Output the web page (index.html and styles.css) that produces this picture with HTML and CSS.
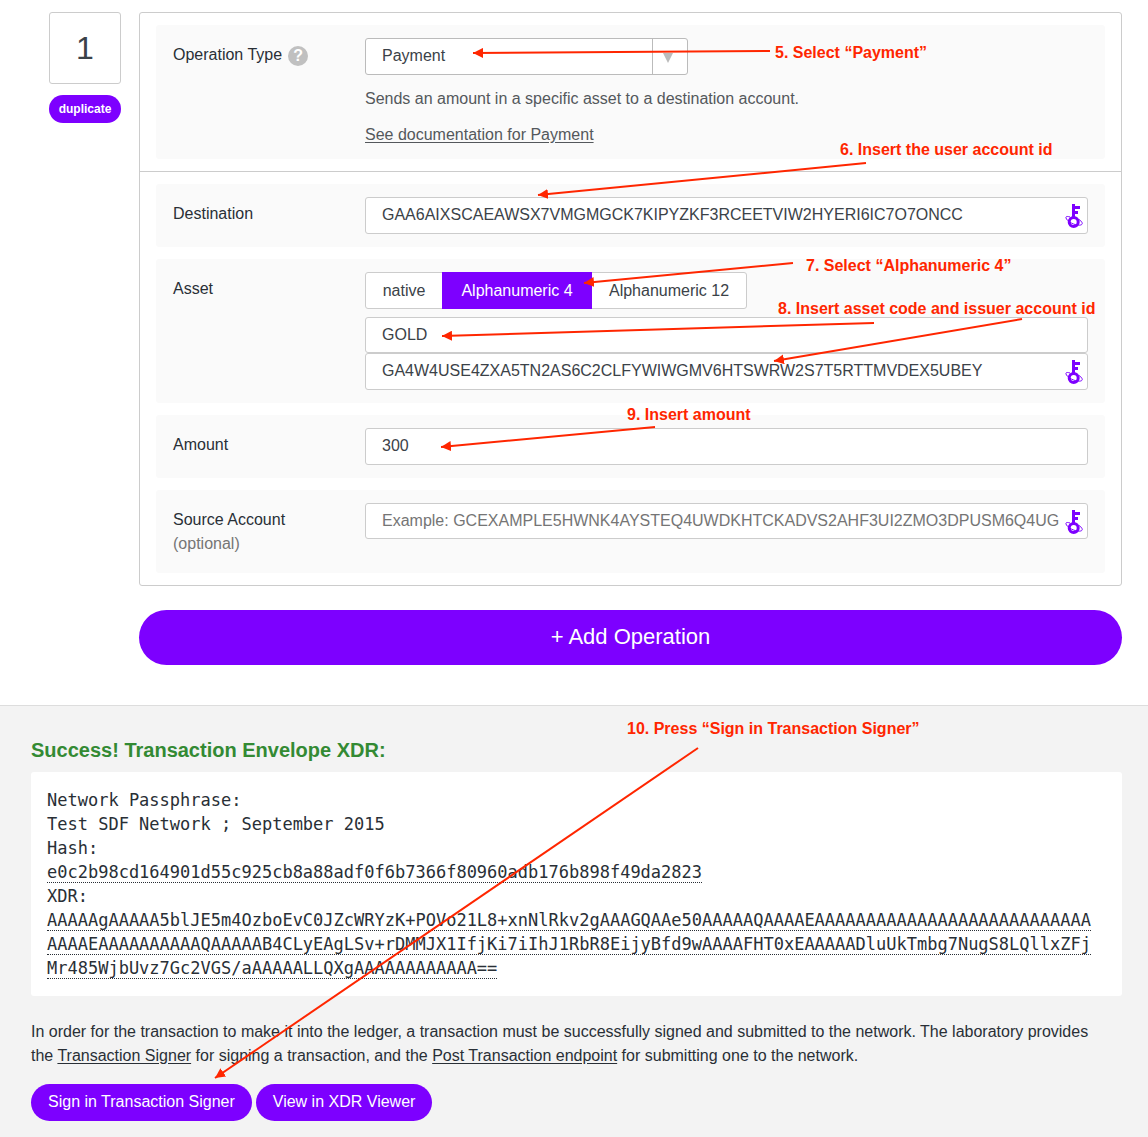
FILE: index.html
```html
<!DOCTYPE html>
<html lang="en">
<head>
  <meta charset="utf-8">
  <title>Transaction Builder</title>
  <link rel="stylesheet" href="styles.css">
</head>
<body>
  <svg class="sprite" aria-hidden="true">
    <symbol id="key" viewBox="0 0 18 25">
      <path fill="currentColor" d="M7 1h3v2h5v3h-5v2h3v3h-3v4H7z"/>
      <circle cx="8.700" cy="19" r="4.500" fill="none" stroke="currentColor" stroke-width="3"/>
      <path fill="none" stroke="currentColor" d="M5 14C2 13 .5 13.500 1 15c1 3 6 6 11 7 4 .6 6-.5 5-2.500-.4-1-1.500-2-3-3"/>
    </symbol>
  </svg>

  <main>
    <section class="builder">
      <div class="sequence">
        <div class="sequence-number">1</div>
        <button class="button button-small" type="button">duplicate</button>
      </div>
      <div class="column">
        <form class="panel">
          <div class="group">
            <div class="row row-type">
              <div class="label">
                <label for="type">Operation Type</label>
                <button class="help" type="button" aria-label="Help">?</button>
              </div>
              <div class="content">
                <div class="picker">
                  <select id="type"><option>Payment</option></select>
                  <svg class="picker-arrow" viewBox="0 0 10 10" aria-hidden="true"><path fill="#bbb" d="M0 0h10L5 10z"/></svg>
                </div>
                <p class="hint">Sends an amount in a specific asset to a destination account.</p>
                <p class="hint"><a href="#payment">See documentation for Payment</a></p>
              </div>
            </div>
          </div>
          <div class="group">
            <div class="row">
              <div class="label"><label for="destination">Destination</label></div>
              <div class="content">
                <div class="key-field">
                  <input id="destination" type="text" value="GAA6AIXSCAEAWSX7VMGMGCK7KIPYZKF3RCEETVIW2HYERI6IC7O7ONCC">
                  <svg class="key"><use href="#key"/></svg>
                </div>
              </div>
            </div>
            <div class="row">
              <div class="label"><label for="code">Asset</label></div>
              <div class="content">
                <div class="toggle">
                  <button type="button">native</button>
                  <button class="active" type="button">Alphanumeric 4</button>
                  <button type="button">Alphanumeric 12</button>
                </div>
                <input id="code" class="input-short" type="text" value="GOLD">
                <div class="key-field">
                  <input type="text" aria-label="Issuer account ID" value="GA4W4USE4ZXA5TN2AS6C2CLFYWIWGMV6HTSWRW2S7T5RTTMVDEX5UBEY">
                  <svg class="key"><use href="#key"/></svg>
                </div>
              </div>
            </div>
            <div class="row">
              <div class="label"><label for="amount">Amount</label></div>
              <div class="content"><input id="amount" type="text" value="300"></div>
            </div>
            <div class="row">
              <div class="label"><label for="source">Source Account<br><span class="optional">(optional)</span></label></div>
              <div class="content">
                <div class="key-field">
                  <input id="source" class="input-short" type="text" placeholder="Example: GCEXAMPLE5HWNK4AYSTEQ4UWDKHTCKADVS2AHF3UI2ZMO3DPUSM6Q4UG">
                  <svg class="key"><use href="#key"/></svg>
                </div>
              </div>
            </div>
          </div>
        </form>
        <button class="button button-large" type="button">+ Add Operation</button>
      </div>
    </section>

    <section class="result">
      <h2>Success! Transaction Envelope XDR:</h2>
      <div class="code">
        <div>Network Passphrase:</div>
        <div>Test SDF Network ; September 2015</div>
        <div>Hash:</div>
        <div><span class="select-all">e0c2b98cd164901d55c925cb8a88adf0f6b7366f80960adb176b898f49da2823</span></div>
        <div>XDR:</div>
        <div><span class="select-all">AAAAAgAAAAA5blJE5m4OzboEvC0JZcWRYzK+POVo21L8+xnNlRkv2gAAAGQAAe50AAAAAQAAAAEAAAAAAAAAAAAAAAAAAAAAAAAAAAAAAAEAAAAAAAAAAQAAAAAB4CLyEAgLSv+rDMMJX1IfjKi7iIhJ1RbR8EijyBfd9wAAAAFHT0xEAAAAADluUkTmbg7NugS8LQllxZFjMr485WjbUvz7Gc2VGS/aAAAAALLQXgAAAAAAAAAAAA==</span></div>
      </div>
      <p class="explanation">In order for the transaction to make it into the ledger, a transaction must be successfully signed and submitted to the network. The laboratory provides the <a href="#signer">Transaction Signer</a> for signing a transaction, and the <a href="#endpoint">Post Transaction endpoint</a> for submitting one to the network.</p>
      <div class="actions">
        <button class="button" type="button">Sign in Transaction Signer</button>
        <button class="button" type="button">View in XDR Viewer</button>
      </div>
    </section>

    <div class="notes">
      <svg class="arrows" width="1148" height="1137" aria-hidden="true">
        <defs>
          <marker id="head" markerUnits="userSpaceOnUse" markerWidth="11" markerHeight="10" refX="10" refY="5" orient="auto">
            <path fill="#ff2600" d="M0 0l10 5-10 5z"/>
          </marker>
        </defs>
        <g stroke="#ff2600" stroke-width="2" marker-end="url(#head)">
          <path d="M770 51L473 53"/>
          <path d="M866 163L538 195"/>
          <path d="M793 263L584 283"/>
          <path d="M874 323L442 336"/>
          <path d="M1022 319L774 361"/>
          <path d="M655 427L441 447"/>
          <path d="M698 748L215 1078"/>
        </g>
      </svg>
      <span class="note note-5">5. Select “Payment”</span>
      <span class="note note-6">6. Insert the user account id</span>
      <span class="note note-7">7. Select “Alphanumeric 4”</span>
      <span class="note note-8">8. Insert asset code and issuer account id</span>
      <span class="note note-9">9. Insert amount</span>
      <span class="note note-10">10. Press “Sign in Transaction Signer”</span>
    </div>
  </main>
</body>
</html>
```

FILE: styles.css
```css
* {
  box-sizing: border-box;
}

body {
  margin: 0;
  background: #fff;
  color: #292f36;
  font: 16px/24px "Liberation Sans", Arial, sans-serif;
}

main {
  position: relative;
}

button,
input,
select {
  margin: 0;
  font: inherit;
}

a {
  color: inherit;
  text-underline-offset: 2px;
}

p {
  margin: 0;
}

.sprite {
  position: absolute;
  width: 0;
  height: 0;
}

/* Operation builder */

.builder {
  display: flex;
  gap: 18px;
  padding: 12px 26px 40px 49px;
}

.sequence {
  display: flex;
  flex-direction: column;
  flex: none;
  gap: 11px;
  width: 72px;
}

.sequence-number {
  height: 72px;
  border: 1px solid #ccc;
  border-radius: 3px;
  color: #3b4248;
  font-size: 32px;
  line-height: 70px;
  text-align: center;
}

.column {
  display: flex;
  flex: 1;
  flex-direction: column;
  gap: 24px;
  min-width: 0;
}

.panel {
  border: 1px solid #ccc;
  border-radius: 3px;
}

.group {
  display: flex;
  flex-direction: column;
  gap: 12px;
  padding: 12px 16px;
}

.group + .group {
  border-top: 1px solid #ccc;
}

.row {
  display: flex;
  padding: 13px 17px;
  border-radius: 3px;
  background: #fafafa;
}

.row-type {
  padding-bottom: 12px;
}

.label {
  display: flex;
  flex: none;
  align-items: flex-start;
  gap: 6px;
  width: 192px;
  padding: 5px 0 4px;
}

.optional {
  color: #757575;
}

.help {
  width: 20px;
  height: 20px;
  margin-top: 3px;
  padding: 0;
  border: 0;
  border-radius: 50%;
  background: #c0c0c0;
  color: #fff;
  font-weight: 700;
  line-height: 20px;
}

.content {
  flex: 1;
  min-width: 0;
}

.hint {
  margin-top: 12px;
  color: #54585c;
}

input,
select {
  display: block;
  width: 100%;
  height: 37px;
  padding: 0 16px 2px;
  border: 1px solid #ccc;
  border-radius: 3px;
  background: #fff;
  color: #3b4248;
}

input::placeholder {
  color: #757575;
  opacity: 1;
}

.input-short {
  height: 36px;
  padding-bottom: 0;
}

.picker {
  position: relative;
  width: 323px;
}

.picker::after {
  position: absolute;
  top: 0;
  right: 35px;
  bottom: 0;
  border-left: 1px solid #bbb;
  content: "";
}

select {
  border-color: #bbb;
  appearance: none;
}

.picker-arrow {
  position: absolute;
  top: 15px;
  right: 15px;
  width: 10px;
  height: 10px;
  pointer-events: none;
}

.key-field {
  position: relative;
}

.key-field input {
  padding-right: 26px;
}

.key {
  position: absolute;
  top: 6px;
  right: 5px;
  width: 18px;
  height: 25px;
  color: #7d00ff;
}

.toggle {
  display: inline-grid;
  grid-template-columns: 76px 150px 154px;
  margin-bottom: 8px;
  border: 1px solid #ccc;
  border-radius: 3px;
  background: #fff;
  vertical-align: top;
}

.toggle button {
  height: 35px;
  padding: 0;
  border: 0;
  background: none;
  color: #3b4248;
}

.toggle .active {
  height: 37px;
  margin: -1px 0;
  background: #7d00ff;
  color: #fff;
}

.button {
  height: 37px;
  padding: 0 17px 2px;
  border: 0;
  border-radius: 28px;
  background: #7d00ff;
  color: #fff;
}

.button-small {
  height: 28px;
  padding: 0;
  font-size: 12px;
  font-weight: 700;
}

.button-large {
  height: 55px;
  font-size: 22px;
}

/* Result */

.result {
  padding: 32px 26px 16px 31px;
  border-top: 1px solid #ddd;
  background: #f3f3f3;
}

h2 {
  margin: 0 0 10px;
  color: #338a33;
  font-size: 20px;
  line-height: 24px;
}

.code {
  margin-bottom: 24px;
  padding: 16px 26px 16px 16px;
  border-radius: 3px;
  background: #fff;
  font-family: "DejaVu Sans Mono", monospace;
  font-size: 17px;
  overflow-wrap: anywhere;
}

.select-all {
  border-bottom: 1px dotted #292f36;
}

.explanation {
  padding-right: 16px;
}

.actions {
  display: flex;
  gap: 4px;
  margin-top: 16px;
}

/* Tutorial notes drawn over the page */

.notes {
  position: absolute;
  top: 0;
  left: 0;
  pointer-events: none;
}

.arrows {
  display: block;
}

.note {
  position: absolute;
  color: #ff2600;
  font-weight: 700;
  white-space: nowrap;
}

.note-5 {
  top: 41px;
  left: 775px;
}

.note-6 {
  top: 138px;
  left: 840px;
}

.note-7 {
  top: 254px;
  left: 806px;
}

.note-8 {
  top: 297px;
  left: 778px;
}

.note-9 {
  top: 403px;
  left: 627px;
}

.note-10 {
  top: 717px;
  left: 627px;
}
```
